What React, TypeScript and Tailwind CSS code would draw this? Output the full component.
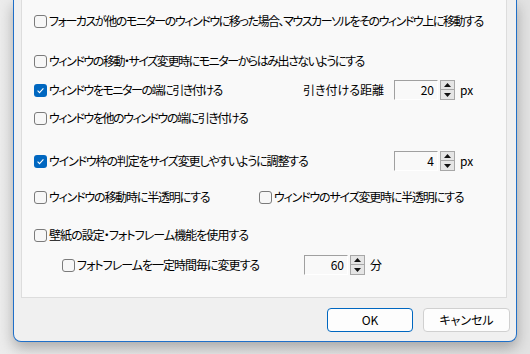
import React from 'react';

const jp = "[font-family:'Noto_Sans_CJK_JP',sans-serif] [font-feature-settings:'palt'] text-[12px] leading-none text-black whitespace-nowrap";

function Check({ on }: { on?: boolean }) {
  if (on) {
    return (
      <span className="flex h-[13px] w-[13px] shrink-0 items-center justify-center rounded-[3px] bg-[#0067c0]">
        <svg width="9" height="9" viewBox="0 0 9 9">
          <path d="M1.6 4.7 3.5 6.6 7.4 2.4" fill="none" stroke="white" strokeWidth="1.1" />
        </svg>
      </span>
    );
  }
  return <span className="h-[13px] w-[13px] shrink-0 rounded-[3px] border border-[#7b7b7b] bg-[#f7f7f7]" />;
}

// tracking differs per label so the line lengths match the original dialog
function Item({ on, label, track = 'tracking-[-1.45px]' }: { on?: boolean; label: string; track?: string }) {
  return (
    <div className="flex items-center gap-[2px]">
      <Check on={on} />
      <span className={`${track} ${jp}`}>{label}</span>
    </div>
  );
}

function Spin({ value }: { value: string }) {
  return (
    <div className="flex items-center">
      <div className={`flex h-[20px] w-[44px] items-center justify-end border border-t-[#a0a0a0] border-l-[#a0a0a0] border-r-white border-b-white bg-[#f9f9f9] pr-[3px] ${jp}`}>
        {value}
      </div>
      <div className="ml-[2px] flex h-[20px] w-[15px] flex-col">
        <div className="flex h-[10px] items-center justify-center border border-[#a7a7a7] bg-[#e5e5e5]">
          <svg width="7" height="4" viewBox="0 0 7 4"><path d="M0 4 3.5 0 7 4Z" fill="#111" /></svg>
        </div>
        <div className="flex h-[10px] items-center justify-center border border-t-0 border-[#a7a7a7] bg-[#e5e5e5]">
          <svg width="7" height="4" viewBox="0 0 7 4"><path d="M0 0 3.5 4 7 0Z" fill="#111" /></svg>
        </div>
      </div>
    </div>
  );
}

export default function App() {
  return (
    <div className="h-[354px] w-[530px] overflow-hidden bg-[#e6e6e6] bg-gradient-to-r from-[#ececec] to-[#e2e2e2]">
      <div className="ml-[13px] h-[342px] w-[504px] rounded-b-[8px] border-x border-b border-[#1f6fc8] bg-[#f0f0f0] shadow-[0_6px_14px_rgba(0,0,0,0.28)]">
        <div className="ml-[7px] h-[298px] w-[486px] border-x border-b border-[#dddddd] bg-[#f9f9f9] pl-[12px] pt-[11px]">
          <div className="flex h-[20px] items-center">
            <Item label="フォーカスが他のモニターのウィンドウに移った場合、マウスカーソルをそのウィンドウ上に移動する" />
          </div>
          <div className="mt-[20px] flex h-[20px] items-center">
            <Item label="ウィンドウの移動・サイズ変更時にモニターからはみ出さないようにする" />
          </div>
          <div className="mt-[9px] flex h-[20px] items-center">
            <div className="w-[269px]">
              <Item on label="ウィンドウをモニターの端に引き付ける" />
            </div>
            <span className={`w-[91px] ${jp}`}>引き付ける距離</span>
            <Spin value="20" />
            <span className={`ml-[5px] ${jp}`}>px</span>
          </div>
          <div className="mt-[8px] flex h-[20px] items-center">
            <Item label="ウィンドウを他のウィンドウの端に引き付ける" />
          </div>
          <div className="mt-[23px] flex h-[20px] items-center">
            <div className="w-[360px]">
              <Item on track="tracking-[-1.15px]" label="ウインドウ枠の判定をサイズ変更しやすいように調整する" />
            </div>
            <Spin value="4" />
            <span className={`ml-[5px] ${jp}`}>px</span>
          </div>
          <div className="mt-[16px] flex h-[20px] items-center">
            <div className="w-[225px]">
              <Item track="tracking-[-1.2px]" label="ウィンドウの移動時に半透明にする" />
            </div>
            <Item track="tracking-[-1.2px]" label="ウィンドウのサイズ変更時に半透明にする" />
          </div>
          <div className="mt-[18px] flex h-[20px] items-center">
            <Item track="tracking-[-0.95px]" label="壁紙の設定・フォトフレーム機能を使用する" />
          </div>
          <div className="mt-[10px] flex h-[20px] items-center pl-[28px]">
            <div className="w-[242px]">
              <Item track="tracking-[-1px]" label="フォトフレームを一定時間毎に変更する" />
            </div>
            <Spin value="60" />
            <span className={`ml-[5px] ${jp}`}>分</span>
          </div>
        </div>
        <div className="mt-[10px] flex justify-end gap-[10px] pr-[6px]">
          <button className={`flex h-[24px] w-[86px] items-center justify-center rounded-[4px] border border-[#0067c0] bg-[#fdfdfd] ${jp}`}>
            OK
          </button>
          <button className={`flex h-[24px] w-[87px] items-center justify-center rounded-[4px] border border-[#d0d0d0] bg-[#fdfdfd] ${jp}`}>
            キャンセル
          </button>
        </div>
      </div>
    </div>
  );
}
